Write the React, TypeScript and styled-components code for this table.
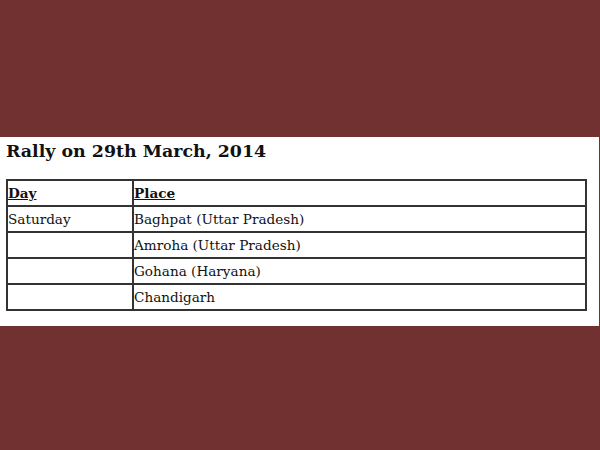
import React from "react";
import styled, { createGlobalStyle } from "styled-components";

const Global = createGlobalStyle`
  html, body { margin: 0; padding: 0; background: #723131; }
  body { width: 600px; height: 450px; overflow: hidden; }
`;

const Page = styled.div`
  width: 600px;
  height: 450px;
  padding-top: 137px;
  box-sizing: border-box;
  background: #723131;
`;

const Panel = styled.section`
  width: 599px;
  height: 189px;
  background: #ffffff;
  box-sizing: border-box;
  padding: 1px 0 0 6px;
  color: #111;
`;

const Title = styled.h2`
  margin: 0;
  font-family: "DejaVu Serif", serif;
  font-weight: bold;
  font-size: 17.4px;
  line-height: 26px;
  color: #111;
`;

const Table = styled.table`
  margin-top: 15px;
  width: 581px;
  border-collapse: collapse;
  font-family: "DejaVu Serif", serif;
  font-size: 13.6px;
  color: #111;
`;

const Cell = styled.td<{ $head?: boolean; $first?: boolean }>`
  border: 2px solid #333;
  height: 22px;
  padding: 1px 1px 1px 0;
  width: ${(p) => (p.$first ? "123px" : "auto")};
  font-weight: ${(p) => (p.$head ? "bold" : "normal")};
  text-decoration: ${(p) => (p.$head ? "underline" : "none")};
  vertical-align: middle;
  line-height: 20px;
`;

const rows = [
  ["Saturday", "Baghpat (Uttar Pradesh)"],
  ["", "Amroha (Uttar Pradesh)"],
  ["", "Gohana (Haryana)"],
  ["", "Chandigarh"],
];

export default function App() {
  return (
    <>
      <Global />
      <Page>
        <Panel>
          <Title>Rally on 29th March, 2014</Title>
          <Table>
            <tbody>
              <tr>
                <Cell $head $first>Day</Cell>
                <Cell $head>Place</Cell>
              </tr>
              {rows.map(([d, p], i) => (
                <tr key={i}>
                  <Cell $first>{d}</Cell>
                  <Cell>{p}</Cell>
                </tr>
              ))}
            </tbody>
          </Table>
        </Panel>
      </Page>
    </>
  );
}
